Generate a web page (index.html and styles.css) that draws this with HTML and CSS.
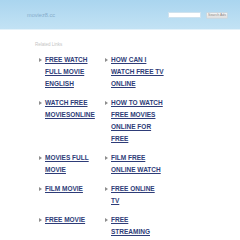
FILE: index.html
```html
<!DOCTYPE html>
<html>
<head>
<meta charset="utf-8">
<link rel="stylesheet" href="styles.css">
</head>
<body>
<header class="top">
  <div class="domain">moviez8.cc</div>
  <form class="search">
    <input class="search-input" type="text">
    <button class="search-btn" type="button">Search Ads</button>
  </form>
</header>
<main class="content">
  <div class="related">Related Links</div>
  <ul class="links">
    <li><span class="arrow"></span><a href="#">FREE WATCH FULL MOVIE ENGLISH</a></li>
    <li><span class="arrow"></span><a href="#">HOW CAN I WATCH FREE TV ONLINE</a></li>
    <li><span class="arrow"></span><a href="#">WATCH FREE MOVIESONLINE</a></li>
    <li><span class="arrow"></span><a href="#">HOW TO WATCH FREE MOVIES ONLINE FOR FREE</a></li>
    <li><span class="arrow"></span><a href="#">MOVIES FULL MOVIE</a></li>
    <li><span class="arrow"></span><a href="#">FILM FREE ONLINE WATCH</a></li>
    <li><span class="arrow"></span><a href="#">FILM MOVIE</a></li>
    <li><span class="arrow"></span><a href="#">FREE ONLINE TV</a></li>
    <li><span class="arrow"></span><a href="#">FREE MOVIE</a></li>
    <li><span class="arrow"></span><a href="#">FREE STREAMING</a></li>
  </ul>
</main>
</body>
</html>
```
FILE: styles.css
```css
html, body {
  margin: 0;
  padding: 0;
  background: #ffffff;
  font-family: "Liberation Sans", Arial, sans-serif;
}
.top {
  height: 29px;
  background: linear-gradient(#aad5ef, #c2e2f4);
  border-bottom: 1px solid #e4f2fa;
  display: flex;
  align-items: center;
  justify-content: space-between;
  padding: 0 12px 0 27px;
}
.domain {
  font-size: 5.6px;
  color: #86accb;
  margin-top: 1px;
}
.search {
  display: flex;
  align-items: center;
  gap: 5px;
  margin: 1px 0 0;
}
.search-input {
  width: 33px;
  height: 6px;
  padding: 0;
  border: 1px solid #cfe2ee;
  background: #ffffff;
  box-sizing: border-box;
}
.search-btn {
  width: 22px;
  height: 7px;
  padding: 0;
  font-family: "Liberation Sans", Arial, sans-serif;
  font-size: 3.5px;
  line-height: 5px;
  color: #8a8a8a;
  background: linear-gradient(#f4f4f4, #dedede);
  border: 1px solid #c8d8e2;
  border-radius: 1px;
}
.content {
  padding: 12px 0 0 35px;
}
.related {
  font-size: 4.5px;
  line-height: 6px;
  color: #c4c4c4;
  margin-bottom: 6px;
}
.links {
  list-style: none;
  margin: 0;
  padding: 0 0 0 4px;
  display: grid;
  grid-template-columns: 66px 66px;
  row-gap: 7px;
}
.links li {
  display: flex;
  align-items: flex-start;
}
.arrow {
  width: 0;
  height: 0;
  margin: 3.5px 3px 0 0;
  border-top: 2.5px solid transparent;
  border-bottom: 2.5px solid transparent;
  border-left: 3px solid #8d8d8d;
  flex: none;
}
.links a {
  font-size: 6.5px;
  line-height: 12px;
  font-weight: bold;
  color: #2e3c78;
  text-decoration: underline;
  width: 53.6px;
}
```
